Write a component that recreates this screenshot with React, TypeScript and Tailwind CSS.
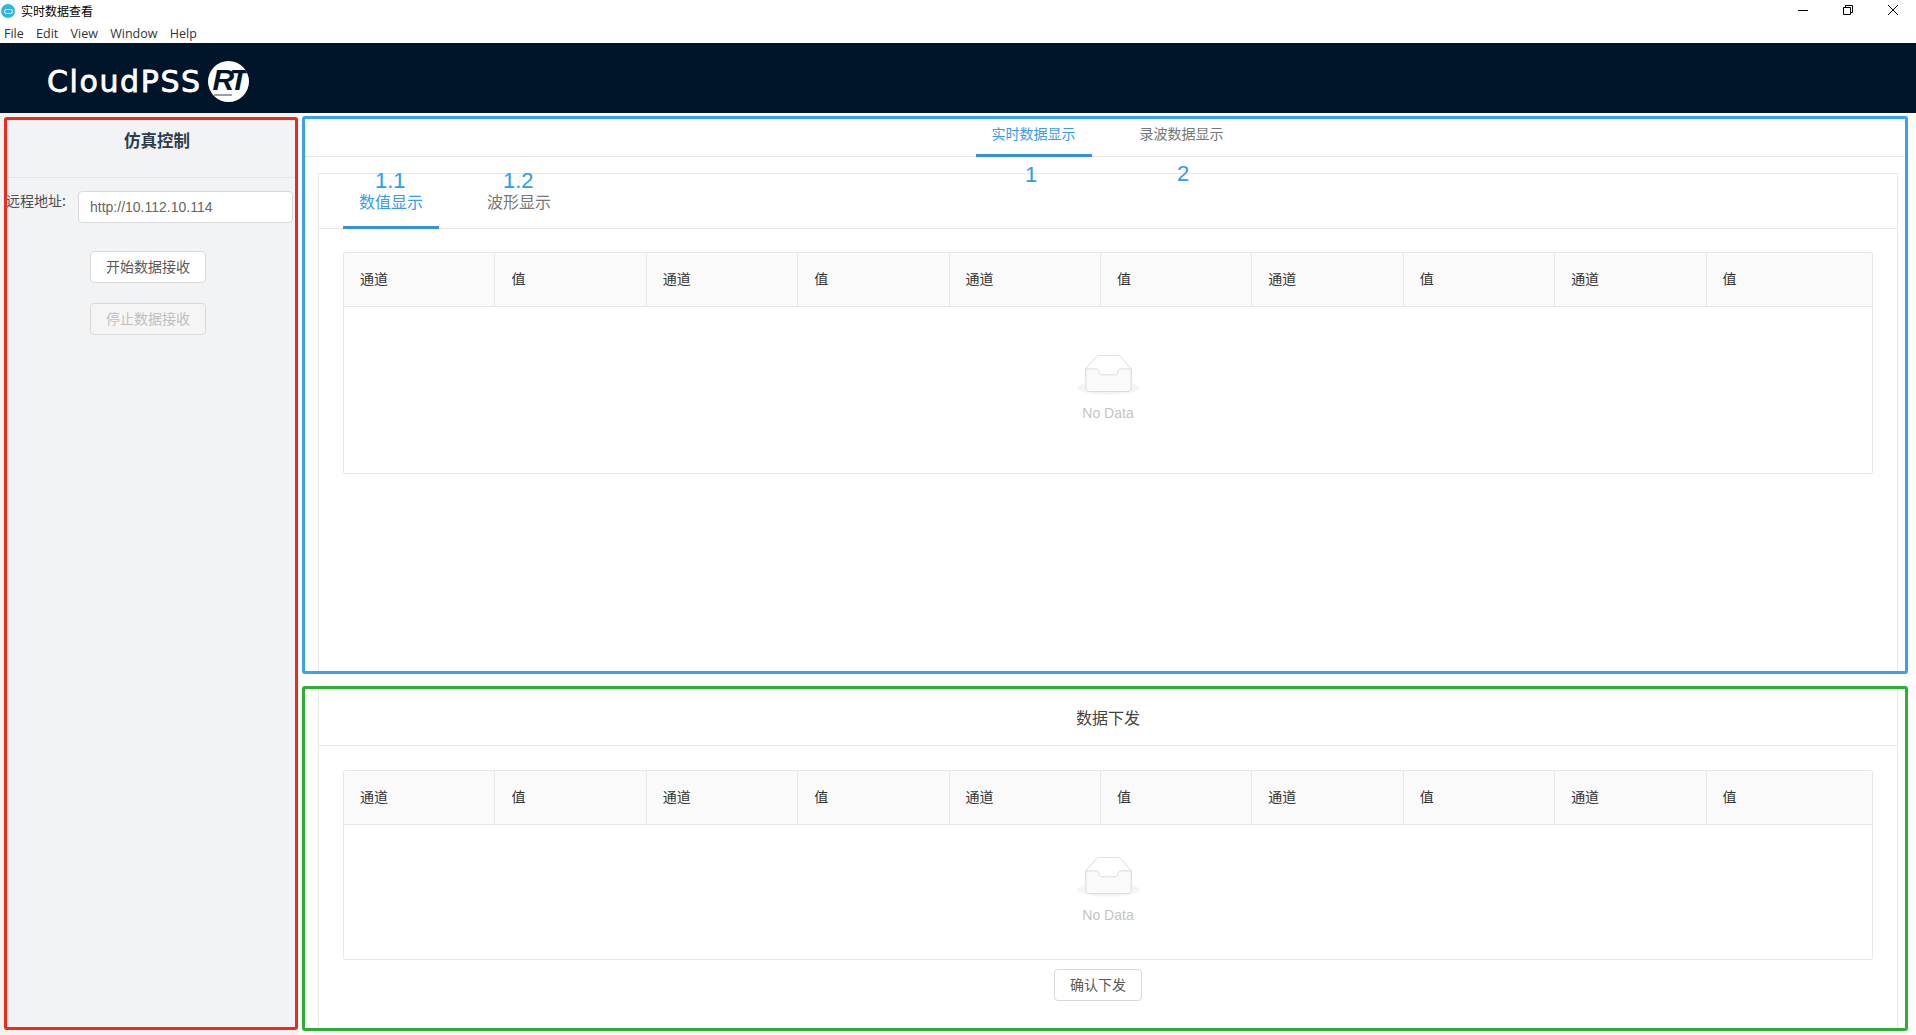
const CJK = 'font-["Noto_Sans_CJK_SC","Noto_Sans",sans-serif]'

function EmptyIcon() {
  return (
    <svg width="63" height="41" viewBox="0 0 64 41" className="block">
      <ellipse cx="32" cy="33" rx="32" ry="7" fill="#f5f5f5" />
      <g fill="#fafafa" stroke="#d9d9d9" fillRule="nonzero">
        <path d="M55 13.5 44.2 1.3C43.7.5 42.9 0 42.100 0H21.900c-.8 0-1.600.5-2.100 1.300L9 13.500V23h46v-9.500z" fill="none" />
        <path d="M41.600 16.800c0-1.700 1-3 2.300-3H55v19c0 2.200-1.400 4-3.100 4H12.100c-1.700 0-3.100-1.800-3.100-4v-19h11.100c1.300 0 2.300 1.300 2.300 3 0 1.700 1.100 3 2.400 3h14.400c1.300 0 2.400-1.400 2.400-3z" />
      </g>
    </svg>
  )
}

function DataTable({ bodyHeight, gap }: { bodyHeight: string; gap: string }) {
  const cols = ['通道', '值', '通道', '值', '通道', '值', '通道', '值', '通道', '值']
  return (
    <div className="rounded-[2px] border border-[#e8e8e8] text-[14px]">
      <div className="flex h-[54px] border-b border-[#e8e8e8] bg-[#fafafa] text-[#333]">
        {cols.map((c, i) => (
          <div
            key={i}
            className={`flex items-center pb-[3px] pl-4 ${i === 9 ? 'flex-1' : 'w-[151.4px] border-r border-[#e8e8e8]'}`}
          >
            {c}
          </div>
        ))}
      </div>
      <div className={`flex flex-col items-center ${bodyHeight} ${gap}`}>
        <EmptyIcon />
        <span className="mt-[7px] font-['Liberation_Sans',sans-serif] text-[14px] text-[#c4c4c4]">No Data</span>
      </div>
    </div>
  )
}

function Logo() {
  return (
    <div className="flex items-center pt-[6px] pl-[47px]">
      <span className="mt-[2px] font-['DejaVu_Sans',sans-serif] text-[30px] leading-none tracking-[1.6px] text-white [-webkit-text-stroke:0.8px_white]">
        CloudPSS
      </span>
      <div className="relative ml-[6px] flex h-[41px] w-[41px] items-center justify-center overflow-hidden rounded-full bg-white">
        <span className="pb-[3px] font-['Liberation_Sans',sans-serif] text-[30px] leading-none font-bold tracking-[-4px] text-[#00142a] italic">
          RT
        </span>
        <div className="absolute bottom-[6px] left-[6px] h-[2px] w-[18px] -skew-x-12 bg-[#9aa0a8]" />
      </div>
    </div>
  )
}

function WindowButtons() {
  return (
    <div className="ml-auto flex items-center gap-[35px] pr-[18px] pb-[2px]">
      <svg width="10" height="10" viewBox="0 0 10 10" fill="none" stroke="black">
        <path d="M0 5.500h10" />
      </svg>
      <svg width="10" height="10" viewBox="0 0 10 10" fill="none" stroke="black">
        <path d="M.5 2.500h7v7h-7z M2.500 2.500v-2h7v7h-2" />
      </svg>
      <svg width="10" height="10" viewBox="0 0 10 10" fill="none" stroke="black">
        <path d="M0 0l10 10M10 0L0 10" />
      </svg>
    </div>
  )
}

function Sidebar() {
  return (
    <aside className="w-[298px] shrink-0 bg-[#f2f3f5] pt-[4px] pb-[5px] pl-[4px]">
      <div className="h-full rounded-[3px] border-[3px] border-[#f0281e]">
        <div className="flex h-[58px] items-center justify-center border-b border-[#e6e7ea] pb-[17px] pl-[12px] text-[16.5px] font-bold text-[#303b4a]">
          仿真控制
        </div>
        <div className="-ml-[1px] flex items-start pt-[13px]">
          <span className="-mt-[1px] w-[72px] text-[14px] leading-[20px] text-[#4a4f57]">远程地址:</span>
          <div className="flex h-[32px] w-[215px] items-center rounded-[4px] border border-[#d9d9d9] bg-white pl-[11px] font-['Liberation_Sans',sans-serif] text-[14px] text-[#666]">
            http://10.112.10.114
          </div>
        </div>
        <div className="flex flex-col gap-[20px] pt-[28px] pl-[83px]">
          <button className="h-[32px] w-[116px] rounded-[4px] border border-[#d9d9d9] bg-white pb-[2px] text-[14px] text-[#595959]">
            开始数据接收
          </button>
          <button className="h-[32px] w-[116px] rounded-[4px] border border-[#d9d9d9] bg-[#f5f5f5] pb-[2px] text-[14px] text-[#bfbfbf]">
            停止数据接收
          </button>
        </div>
      </div>
    </aside>
  )
}

function Badge({ className, children }: { className: string; children: string }) {
  return (
    <span className={`absolute font-['Liberation_Sans',sans-serif] text-[22px] leading-[28px] text-[#2f9bea] ${className}`}>
      {children}
    </span>
  )
}

function Realtime() {
  return (
    <section className="relative flex h-[558px] flex-col rounded-[3px] border-[3px] border-[#3aa0f0] bg-white">
      <div className="flex h-[38px] shrink-0 justify-center border-b border-[#e8e8e8] pl-[5px] text-[14px]">
        <div className="flex h-[38px] w-[116px] items-center justify-center border-b-[3px] border-[#3a8ee0] pb-[6px] text-[#3a9be8]">
          实时数据显示
        </div>
        <div className="ml-[32px] flex h-[38px] w-[116px] items-center justify-center border-b-[3px] border-transparent pb-[6px] text-[#777]">
          录波数据显示
        </div>
      </div>
      <div className="mt-[16px] mr-[7px] ml-[13px] flex-1 border-x border-t border-[#e8e8e8]">
        <div className="flex h-[55px] gap-[32px] border-b border-[#e8e8e8] pl-[24px] text-[16px]">
          <div className="flex h-[55px] w-[96px] items-center justify-center border-b-[3px] border-[#3a8ee0] pt-[2px] text-[#3a9be8]">
            数值显示
          </div>
          <div className="flex h-[55px] w-[96px] items-center justify-center border-b-[3px] border-transparent pt-[2px] text-[#777]">
            波形显示
          </div>
        </div>
        <div className="px-[24px] pt-[23px]">
          <DataTable bodyHeight="h-[166px]" gap="pt-[48px]" />
        </div>
      </div>
      <Badge className="top-[42px] left-[720px]">1</Badge>
      <Badge className="top-[41px] left-[872px]">2</Badge>
      <Badge className="top-[48px] left-[70px]">1.1</Badge>
      <Badge className="top-[48px] left-[198px]">1.2</Badge>
    </section>
  )
}

function Downlink() {
  return (
    <section className="mt-[12px] h-[345px] rounded-[3px] border-[3px] border-[#2fae35] bg-white">
      <div className="mr-[7px] ml-[13px] h-full border-x border-[#e8e8e8]">
        <div className="flex h-[57px] items-center justify-center border-b border-[#e8e8e8] text-[16px] text-[#444]">
          数据下发
        </div>
        <div className="px-[24px] pt-[24px]">
          <DataTable bodyHeight="h-[134px]" gap="pt-[32px]" />
          <div className="flex justify-center pt-[9px] pr-[20px]">
            <button className="h-[32px] w-[88px] rounded-[4px] border border-[#d9d9d9] bg-white pb-[2px] text-[14px] text-[#595959]">
              确认下发
            </button>
          </div>
        </div>
      </div>
    </section>
  )
}

export default function App() {
  return (
    <div className={`flex h-[1035px] flex-col overflow-hidden bg-white ${CJK}`}>
      <div className="flex h-[22px] shrink-0 items-center bg-white">
        <div className="ml-[1px] flex h-[14px] w-[14px] items-center justify-center rounded-full bg-[#2eb4e6]">
          <div className="h-[5px] w-[9px] rounded-full border border-white" />
        </div>
        <span className="ml-[6px] text-[12px] text-black">实时数据查看</span>
        <WindowButtons />
      </div>
      <div className="flex h-[21px] shrink-0 items-center gap-[12.3px] pt-[4px] pl-[4px] font-['Open_Sans',sans-serif] text-[12.5px] text-[#333]">
        <span>File</span>
        <span>Edit</span>
        <span>View</span>
        <span>Window</span>
        <span>Help</span>
      </div>
      <header className="flex h-[70px] shrink-0 items-center bg-[#00142a]">
        <Logo />
      </header>
      <div className="flex min-h-0 flex-1">
        <Sidebar />
        <main className="flex-1 bg-[#fdfdfd] pt-[3px] pr-[8px] pl-[4px]">
          <Realtime />
          <Downlink />
        </main>
      </div>
    </div>
  )
}
